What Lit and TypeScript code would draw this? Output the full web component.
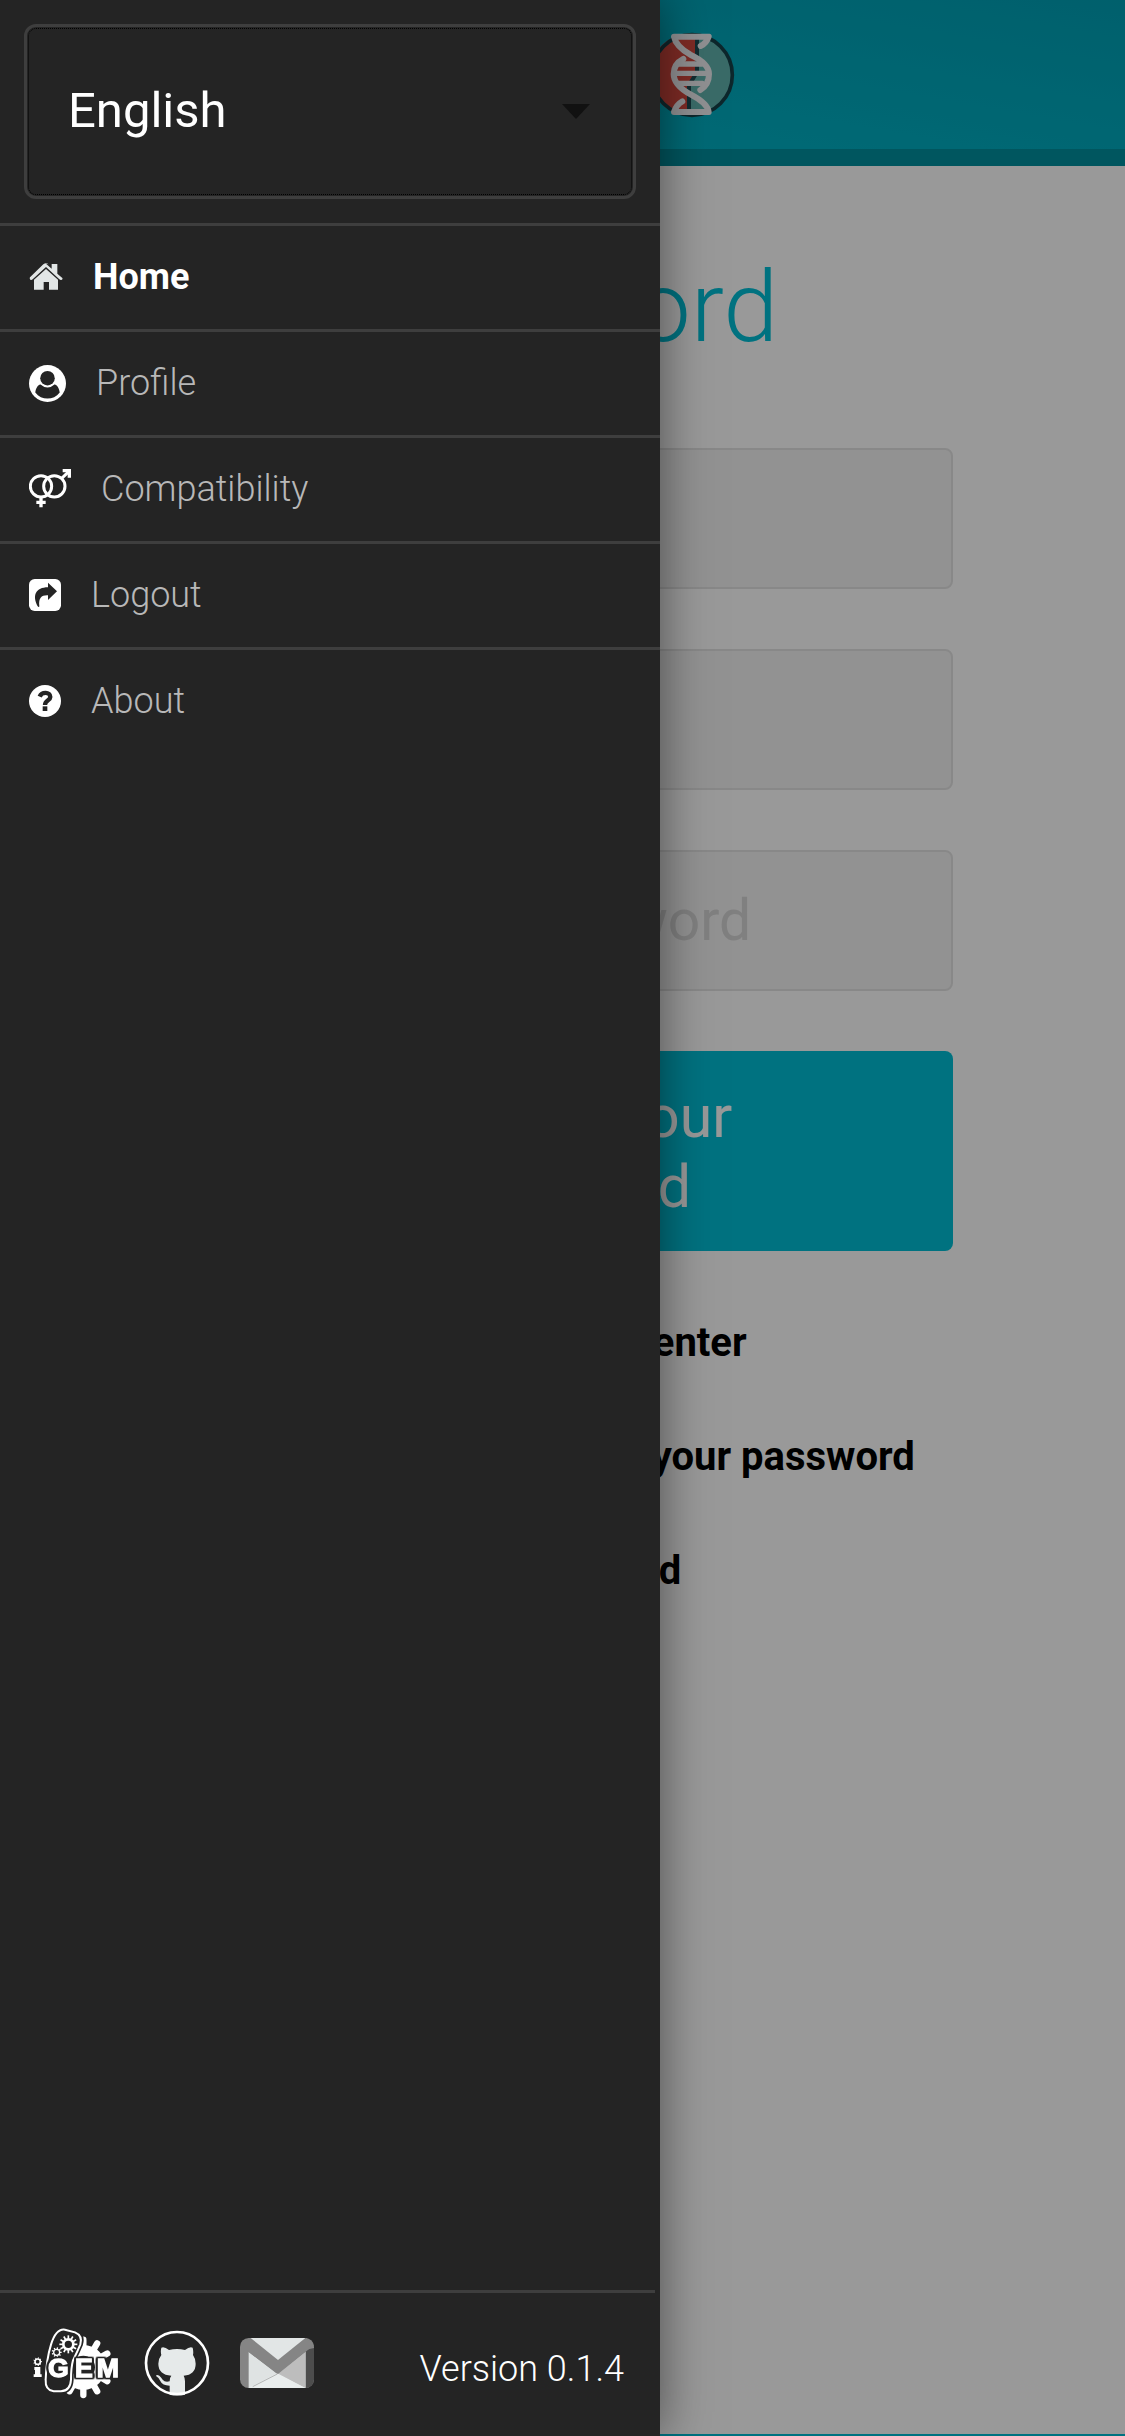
import { LitElement, html, css, svg, type TemplateResult } from "lit";
import { customElement, property } from "lit/decorators.js";

const homeIcon = html`<svg class="icon" width="34" height="28" viewBox="0 0 102 84" aria-hidden="true">
  <path fill="#e2e6e6" d="M51 2 L68 17 V3 h17 v29 L100 45 q2 4 -3 6 q-3 1 -6 -2 L51 12 L11 49 q-4 3 -7 1 q-3 -3 -1 -7 L43 4 Q51 -3 59 4 Z"/>
  <path fill="#e2e6e6" d="M51 18 L87 50 V80 H60 V57 H44 V80 H15 V50 Z"/>
</svg>`;

const profileIcon = html`<svg class="icon" width="37" height="37" viewBox="0 0 112 112" aria-hidden="true">
  <circle cx="56" cy="56" r="56" fill="#fff"/>
  <path fill="#242424" d="M19 83 C21 68 27 60 37 58 C48 68 64 68 75 58 C85 60 91 68 93 83 C74 108 38 108 19 83 Z"/>
  <circle cx="56" cy="40" r="28" fill="#fff"/>
  <circle cx="56" cy="40" r="22" fill="#242424"/>
</svg>`;

const compatibilityIcon = html`<svg class="icon" width="42" height="42" viewBox="0 0 126 126" aria-hidden="true">
  <g fill="none" stroke="#fff" stroke-width="9">
    <circle cx="36" cy="55" r="32"/>
    <circle cx="76" cy="55" r="32"/>
    <path d="M98 31 L120 10"/>
    <path d="M36 87 V118 M22 103 H50" stroke-width="10"/>
    <path d="M101 8 H121 V29" stroke-width="10"/>
  </g>
</svg>`;

const logoutIcon = html`<svg class="icon" width="32" height="32" viewBox="0 0 96 96" aria-hidden="true">
  <rect width="96" height="96" rx="17" fill="#fff"/>
  <path fill="#242424" d="M57 11 L84 37 L57 63 V49 C38 48 28 56 31 82 C31 85 28 85 26 82 C9 50 20 25 57 25 Z"/>
</svg>`;

const aboutIcon = html`<svg class="icon" width="32" height="32" viewBox="0 0 96 96" aria-hidden="true">
  <circle cx="48" cy="48" r="48" fill="#fff"/>
  <path fill="none" stroke="#242424" stroke-width="13" d="M32 35 C38 20 64 20 64 36 C64 46 48 46 48 60"/>
  <rect x="41" y="64" width="14" height="14" fill="#242424"/>
</svg>`;

const spokes = (cx: number, cy: number, inner: number, outer: number, count: number) =>
  Array.from({ length: count }, (_, i) => {
    const a = (i * 2 * Math.PI) / count;
    return svg`<line x1=${cx + inner * Math.cos(a)} y1=${cy + inner * Math.sin(a)}
      x2=${cx + outer * Math.cos(a)} y2=${cy + outer * Math.sin(a)}/>`;
  });

const igemLogo = html`<svg class="badge" width="88" height="72" viewBox="96 132 264 216" aria-hidden="true">
  <circle cx="247" cy="253" r="51" fill="none" stroke="#fff" stroke-width="32"/>
  <g stroke="#fff" stroke-width="19" stroke-linecap="round">${spokes(247, 253, 60, 83, 12)}</g>
  <path fill="#242424" stroke="#242424" stroke-width="16" d="M150 185 Q165 136 192 140 L222 148 Q246 158 238 184 Q230 204 216 232 Q210 254 210 290 Q208 324 180 325 H158 Q132 322 134 290 Q136 230 150 185 Z"/>
  <path fill="#242424" stroke="#fff" stroke-width="6" d="M150 185 Q165 136 192 140 L222 148 Q246 158 238 184 Q230 204 216 232 Q210 254 210 290 Q208 324 180 325 H158 Q132 322 134 290 Q136 230 150 185 Z"/>
  <g stroke="#fff" fill="none">
    <circle cx="202" cy="184" r="15" stroke-width="8"/>
    <g stroke-width="5">${spokes(202, 184, 17, 27, 12)}</g>
    <circle cx="167" cy="208" r="9" stroke-width="4"/>
    <g stroke-width="4">${spokes(167, 208, 10, 15, 9)}</g>
    <circle cx="110" cy="236" r="8" stroke-width="5"/>
    <g stroke-width="3">${spokes(110, 236, 9, 13, 9)}</g>
  </g>
  <path fill="#fff" d="M100 252 H118 V274 H122 V282 H98 V274 H102 V261 H100 Z"/>
  <g class="letters">
    <text x="141" y="281">G</text>
    <text x="222" y="281">E</text>
    <text x="287" y="281">M</text>
  </g>
</svg>`;

const githubLogo = html`<svg class="badge" width="66" height="66" viewBox="433 152 198 198" aria-hidden="true">
  <path fill="#e6eaea" d="M485 205 Q494 201 508 212 Q532 206 556 212 Q570 201 579 205 Q582 217 580 227 Q588 238 588 253 Q588 286 552 289 Q556 296 556 306 V346 Q532 351 510 346 V319 Q488 319 482 305 Q478 295 469 290 Q470 284 479 289 Q484 294 489 301 Q496 310 510 306 Q510 294 515 289 Q476 286 476 253 Q476 238 485 227 Q482 217 485 205 Z"/>
  <circle cx="532" cy="251" r="93" fill="none" stroke="#fff" stroke-width="8"/>
</svg>`;

const mailLogo = html`<svg class="badge" width="74" height="50" viewBox="0 0 222 150" aria-hidden="true">
  <rect width="222" height="150" rx="26" fill="#858585"/>
  <path fill="#4d4d4d" d="M198 35 L222 30 V124 Q220 148 198 150 Z"/>
  <path fill="#dfe3e3" d="M26 42 L112 108 L196 42 V150 H26 Z"/>
  <path fill="#bdbdbd" d="M112 108 L196 42 V150 Z"/>
  <path fill="#e9eded" d="M26 150 L112 106 L196 150 Z"/>
  <path fill="none" stroke="#9a9a9a" stroke-width="2" d="M38 146 L112 108"/>
  <path fill="#858585" d="M26 0 L114 66 L200 0 L222 22 L196 42 L114 108 L26 42 Z"/>
  <path fill="#e2e6e6" d="M32 0 H196 L114 66 Z"/>
</svg>`;

const dnaLogo = html`<svg class="dna" width="86" height="86" viewBox="0 0 258 258" aria-hidden="true">
  <circle cx="129" cy="129" r="123" fill="#62b3ae"/>
  <path fill="#d3483f" d="M150 8 A123 123 0 1 0 118 251 L118 170 L150 120 Z"/>
  <path fill="none" stroke="#1d4a52" stroke-width="12" d="M144 20 V120 L120 160 V240"/>
  <circle cx="129" cy="129" r="121" fill="none" stroke="#16424a" stroke-width="11"/>
  <g fill="none" stroke="#f1f1f4" stroke-width="18" stroke-linecap="round" stroke-linejoin="round">
    <path d="M155 42 Q172 34 179 14 H75 Q80 42 124 68 Q180 94 180 126 Q180 158 154 174"/>
    <path d="M103 81 Q74 96 74 126 Q74 160 126 188 Q176 214 179 240 H75 Q82 218 100 208"/>
    <path d="M90 96 H158 M80 124 H174 M90 154 H160" stroke-width="16"/>
  </g>
</svg>`;

@customElement("menu-link")
export class MenuLink extends LitElement {
  @property() label = "";
  @property({ type: Boolean }) active = false;
  @property({ attribute: false }) icon?: TemplateResult;

  static styles = css`
    :host {
      display: block;
      border-top: 3px solid #3e3e3e;
    }
    .link {
      display: flex;
      align-items: center;
      gap: 30px;
      padding: 30px 29px 31px;
      color: #b8b8b8;
      font-size: 36px;
      font-weight: 300;
      line-height: 42px;
      text-decoration: none;
    }
    .link.active {
      color: #fff;
      font-weight: 700;
    }
    .icon {
      display: block;
      flex: none;
    }
  `;

  render() {
    return html`<a class="link ${this.active ? "active" : ""}" href="#${this.label.toLowerCase()}">
      ${this.icon}<span>${this.label}</span>
    </a>`;
  }
}

@customElement("side-menu")
export class SideMenu extends LitElement {
  static styles = css`
    :host {
      display: flex;
      flex-direction: column;
      background: #242424;
      color: #fff;
    }
    .language {
      position: relative;
      margin: 24px;
    }
    .select {
      display: block;
      width: 100%;
      height: 175px;
      box-sizing: border-box;
      padding: 0 80px 3px 41px;
      border: 3px solid #3e3e3e;
      border-radius: 12px;
      outline: 1px dotted #000;
      outline-offset: -5px;
      background: transparent;
      color: #fff;
      font-family: inherit;
      font-size: 49px;
      appearance: none;
    }
    .caret {
      position: absolute;
      top: 80px;
      right: 46px;
      pointer-events: none;
    }
    .links {
      flex: 1;
    }
    .footer {
      display: flex;
      align-items: center;
      margin-right: 5px;
      padding: 34px 31px 37px 33px;
      border-top: 3px solid #3e3e3e;
    }
    .social {
      display: flex;
      align-items: center;
      gap: 30px;
    }
    .social a {
      display: block;
    }
    .social a:first-child {
      margin-right: -7px;
    }
    .badge {
      display: block;
    }
    .letters {
      fill: #fff;
      stroke: #fff;
      stroke-width: 4px;
      filter: drop-shadow(5px 0 0 #242424) drop-shadow(-5px 0 0 #242424) drop-shadow(0 4px 0 #242424)
        drop-shadow(0 -4px 0 #242424);
      font-family: "Liberation Sans", sans-serif;
      font-size: 80px;
      font-weight: 700;
    }
    .version {
      margin: 12px 0 0 auto;
      font-size: 36px;
      font-weight: 300;
      line-height: 42px;
    }
  `;

  render() {
    return html`
      <div class="language">
        <select class="select" aria-label="Language">
          <option>English</option>
        </select>
        <svg class="caret" width="28" height="15" viewBox="0 0 28 15" aria-hidden="true">
          <path d="M0 0 H28 L14 15 Z" fill="#111"/>
        </svg>
      </div>
      <nav class="links">
        <menu-link label="Home" active .icon=${homeIcon}></menu-link>
        <menu-link label="Profile" .icon=${profileIcon}></menu-link>
        <menu-link label="Compatibility" .icon=${compatibilityIcon}></menu-link>
        <menu-link label="Logout" .icon=${logoutIcon}></menu-link>
        <menu-link label="About" .icon=${aboutIcon}></menu-link>
      </nav>
      <footer class="footer">
        <div class="social">
          <a href="#igem" aria-label="iGEM">${igemLogo}</a>
          <a href="#github" aria-label="GitHub">${githubLogo}</a>
          <a href="#mail" aria-label="Mail">${mailLogo}</a>
        </div>
        <span class="version">Version 0.1.4</span>
      </footer>
    `;
  }
}

@customElement("password-page")
export class PasswordPage extends LitElement {
  static styles = css`
    :host {
      display: flex;
      flex-direction: column;
      box-sizing: border-box;
      border-bottom: 2px solid #00bfd5;
      background: #fff;
    }
    .header {
      display: flex;
      justify-content: center;
      padding: 32px 0 31px 258px;
      border-bottom: 17px solid #00909f;
      background: linear-gradient(190deg, #00a0b5, #00bacd);
    }
    .dna {
      display: block;
    }
    .title {
      margin: 81px 0;
      color: #00bfd5;
      font-size: 99px;
      font-weight: 300;
      line-height: 120px;
      text-align: center;
    }
    .form {
      display: grid;
      gap: 60px;
      width: min(781px, 100% - 48px);
      margin: 0 auto;
    }
    .field {
      width: 100%;
      height: 141px;
      box-sizing: border-box;
      padding: 0 19px;
      border: 2px solid #e3e3e3;
      border-radius: 8px;
      background: #f4f4f4;
      font-family: inherit;
      font-size: 57px;
    }
    .field::placeholder {
      color: #d6d6d6;
      opacity: 1;
    }
    .submit {
      padding: 31px 160px 29px;
      border: 0;
      border-radius: 8px;
      background: #00bfd5;
      color: #fff;
      font-family: inherit;
      font-size: 59px;
      line-height: 70px;
    }
    .notes {
      display: grid;
      gap: 66px;
      margin-top: 68px;
      color: #000;
      font-size: 40px;
      font-weight: 700;
      line-height: 48px;
      text-align: center;
    }
    .notes p {
      margin: 0;
    }
  `;

  render() {
    return html`
      <header class="header">${dnaLogo}</header>
      <h1 class="title">Password</h1>
      <form class="form">
        <input class="field" type="password" aria-label="Old password" placeholder="Old password">
        <input class="field" type="password" aria-label="New password" placeholder="New password">
        <input class="field" type="password" aria-label="Repeat new password" placeholder="Repeat new password">
        <button class="submit" type="button">Recover your password</button>
      </form>
      <div class="notes">
        <p>Please, always enter</p>
        <p>You still need to provide your password</p>
        <p>Fill password</p>
      </div>
    `;
  }
}

@customElement("app-root")
export class AppRoot extends LitElement {
  static styles = css`
    :host {
      display: grid;
      position: relative;
      min-height: 100vh;
      overflow: hidden;
      font-family: Roboto, sans-serif;
    }
    .page {
      grid-area: 1 / 1;
    }
    .scrim {
      position: absolute;
      inset: 0;
      background: rgba(0, 0, 0, 0.4);
    }
    .menu {
      position: absolute;
      inset: 0 auto 0 0;
      width: min(660px, 90%);
      box-shadow: 0 0 48px rgba(0, 0, 0, 0.5);
    }
  `;

  render() {
    return html`
      <password-page class="page"></password-page>
      <div class="scrim"></div>
      <side-menu class="menu"></side-menu>
    `;
  }
}
